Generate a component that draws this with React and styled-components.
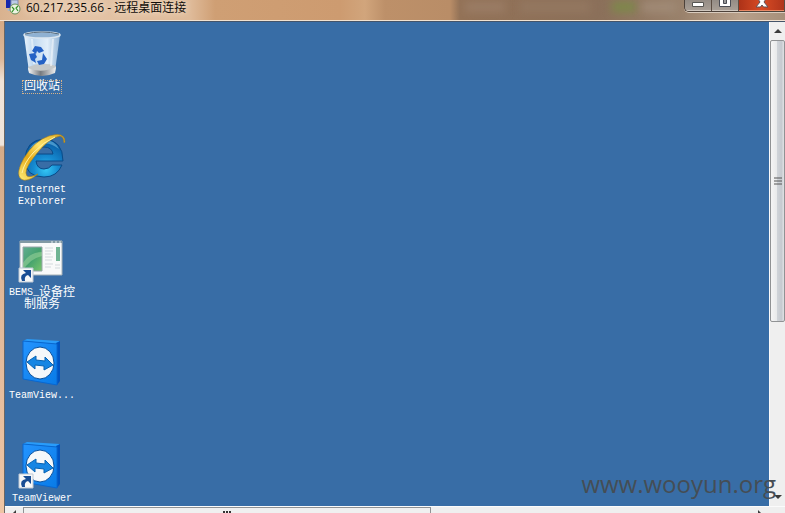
import React from "react";
import styled, { createGlobalStyle } from "styled-components";

const GlobalStyle = createGlobalStyle`
  *, *::before, *::after { box-sizing: border-box; }
  html, body, #root { height: 100%; }
  body { margin: 0; overflow: hidden; }
  button { margin: 0; padding: 0; border: 0; background: none; font: inherit; color: inherit; }
`;

const Window = styled.main`
  position: relative;
  display: grid;
  grid-template-rows: 21px minmax(0, 1fr);
  height: 100vh;
  overflow: hidden;
  font-family: "Open Sans", "Noto Sans CJK SC", sans-serif;
`;

const TitleBar = styled.header`
  position: relative;
  display: flex;
  align-items: flex-start;
  justify-content: space-between;
  overflow: hidden;
  padding-left: 5px;
  background: linear-gradient(90deg, #d9b28f 0, #e5c6a9 60px, #dfbb9a 190px, #cf9f74 215px, #cd9b70 340px, #d1a57c 365px, #bd9069 385px, #b98d67 450px, #937257 460px, #8b705a 600px, #99816b 680px, #b8a08a 740px, #a7907b 100%);
  border-bottom: 1px solid #f1e2d1;
`;

const Glow = styled.div`
  position: absolute;
  top: 2px;
  left: ${(p) => p.$left}px;
  width: ${(p) => p.$width}px;
  height: 10px;
  background: ${(p) => p.$color};
  filter: blur(4px);
`;

const Title = styled.h1`
  position: relative;
  display: flex;
  gap: 5px;
  margin: 0;
  font-size: 12px;
  line-height: 16px;
  font-weight: 400;
  color: #100c09;
  white-space: nowrap;
  text-shadow: 0 0 6px #fff3e5;
`;

const Controls = styled.div`
  position: relative;
  display: flex;
  height: 12px;
  border: 1px solid #4d423a;
  border-width: 0 0 1px 1px;
  border-radius: 0 0 0 5px;
  overflow: hidden;
  box-shadow: 0 1px 0 #d9cbbd;
`;

const ControlButton = styled.button`
  display: flex;
  align-items: flex-start;
  justify-content: center;
  width: ${(p) => (p.$close ? 46 : 27)}px;
  border-right: 1px solid #5b4d43;
  box-shadow: inset 0 -1px 0 ${(p) => (p.$close ? "#e98a66" : "#d0c7be")};
  background: ${(p) =>
    p.$close
      ? "linear-gradient(90deg, #ad3218, #d84b24 50%, #b0351c)"
      : "linear-gradient(#948c85, #aaa097)"};
`;

const Body = styled.div`
  display: grid;
  grid-template-columns: minmax(0, 1fr) 16px;
  grid-template-rows: minmax(0, 1fr) 7px;
  min-height: 0;
  margin-left: 4px;
  border-top: 1px solid #44546a;
  border-left: 1px solid #6b6764;
`;

const Frame = styled.div`
  display: grid;
  grid-template-rows: minmax(0, 1fr);
  min-height: 0;
  background: linear-gradient(#d4aa86 0, #ddb899 38px, #f0e3d7 60px, #efe5dc 124px, #d4ab88 126px, #dfb798 260px, #eec5a4 100%);
`;

const Desktop = styled.section`
  display: flex;
  flex-direction: column;
  align-items: flex-start;
  min-height: 0;
  overflow: hidden;
  padding-top: 8px;
  background: #386da6;
`;

const Shortcut = styled.button`
  flex: 0 0 103px;
  display: flex;
  flex-direction: column;
  align-items: center;
  gap: 3px;
  width: 74px;
  color: #fff;
`;

const Label = styled.span`
  display: block;
  padding: 0 1px;
  font: 10px/12px "Liberation Mono", monospace;
  text-align: center;
  outline: ${(p) => (p.$focused ? "1px dotted #d5b28a" : "none")};
`;

const Chinese = styled.span`
  font: 12px/0 "Noto Sans CJK SC", sans-serif;
  vertical-align: -1px;
`;

const VerticalBar = styled.div`
  display: flex;
  flex-direction: column;
  min-height: 0;
  background: #efefef;
  border-left: 1px solid #fafafa;
`;

const HorizontalBar = styled.div`
  grid-column: 1 / -1;
  display: flex;
  overflow: hidden;
  padding-right: 16px;
  background: #efefef;
  border-top: 1px solid #fbfbfb;
`;

const ArrowButton = styled.button`
  flex: 0 0 18px;
  display: flex;
  align-items: center;
  justify-content: center;
`;

const Track = styled.div`
  flex: 1;
  display: flex;
  flex-direction: ${(p) => (p.$vertical ? "column" : "row")};
  min-width: 0;
  min-height: 0;
`;

const Thumb = styled.div`
  display: flex;
  justify-content: center;
  border: 1px solid #909294;
  ${(p) =>
    p.$vertical
      ? `
    align-items: center;
    height: 63%;
    border-radius: 2px;
    background: linear-gradient(90deg, #f5f5f5 0, #e9eaeb 45%, #cfd3d8 50%, #c6cad0 80%, #e0e2e4 100%);`
      : `
    align-items: flex-start;
    width: 56%;
    border-bottom: 0;
    background: #f0f0f0;
    padding-top: 3px;`}
`;

const Watermark = styled.div`
  position: absolute;
  right: 9px;
  bottom: 12px;
  font: 24px/34px "Open Sans", sans-serif;
  color: #454d55;
  pointer-events: none;
`;

const RemoteIcon = () => (
  <svg width="16" height="15" viewBox="0 0 16 15" aria-hidden="true">
    <path d="M1 0h5v8H1z" fill="#1728ac" />
    <path d="M6 0h7v8H6z" fill="#bccbe8" stroke="#7e8dad" />
    <path d="M2 9h6v2H3z" fill="#aab6ca" />
    <circle cx="10" cy="9" r="5" fill="#edf4e3" stroke="#68905a" />
    <path d="M7 7l2 2-2 3M13 6l-2 2 2 3" fill="none" stroke="#329126" strokeWidth="1.2" />
  </svg>
);

const BinIcon = () => (
  <svg width="48" height="48" viewBox="0 0 48 48" aria-hidden="true">
    <defs>
      <linearGradient id="bin" x2="1">
        <stop stopColor="#e9f4fd" /><stop offset=".25" stopColor="#c0d8ef" />
        <stop offset=".65" stopColor="#e1eefa" /><stop offset="1" stopColor="#92b4d6" />
      </linearGradient>
      <linearGradient id="binBase" x2="1">
        <stop stopColor="#f8f8f8" /><stop offset=".45" stopColor="#777b80" /><stop offset="1" stopColor="#f1f1f1" />
      </linearGradient>
    </defs>
    <path d="M6 5l5 37q13 7 26-1l5-36z" fill="url(#bin)" />
    <path d="M10 37q14-6 28-1l-1 6q-13 6-26 0z" fill="#c6c9c9" />
    <path d="M10 38q13 6 28-1l-1 6q-13 6-26 0z" fill="url(#binBase)" />
    <ellipse cx="24" cy="5" rx="18" ry="3" fill="#8fb1d2" stroke="#dbe6f0" strokeWidth="1.5" />
    <path d="M7 4q17-4 34 0" fill="none" stroke="#526779" />
    <path d="M14 9l2 25M35 9l-2 27" stroke="#fff" strokeWidth="2" opacity=".5" />
    <g fill="#2562c5">
      <path d="M14 21l3-5 6 1 3 4-5 2-2-2-1 3z" />
      <path d="M11 24l6-1 2 4-2 2 1 4-5-3z" />
      <path d="M25 23l4 6-3 5-5 1-2-4 5-1z" />
    </g>
  </svg>
);

const ExplorerIcon = () => (
  <svg width="48" height="48" viewBox="0 0 48 48" aria-hidden="true">
    <defs>
      <radialGradient id="globe" cx=".55" cy=".8" r=".8">
        <stop stopColor="#35c8f5" /><stop offset=".4" stopColor="#168bd1" /><stop offset="1" stopColor="#07549d" />
      </radialGradient>
      <linearGradient id="ring" x1="1" x2="0" y2="1">
        <stop stopColor="#dca61a" /><stop offset=".4" stopColor="#ffe46b" />
        <stop offset=".65" stopColor="#e5a916" /><stop offset="1" stopColor="#fff07d" />
      </linearGradient>
    </defs>
    <path d="M45 28H18q1 8 8 8 5 0 8-4h10Q39 44 26 44 7 44 7 26 8 7 26 6q19 1 19 22zM18 21h17q-1-7-9-7-7 0-8 7z" fill="url(#globe)" stroke="#0a4b88" strokeWidth="1" fillRule="evenodd" />
    <path d="M11 16q5-8 15-9 11 0 15 9-10-7-17-5-8 1-13 5z" fill="#8edaf8" opacity=".45" />
    <path d="M47 9Q47-2 31 3 16 8 6 25-3 41 3 46q6 4 17-5-8 4-11 2-4-5 7-19Q30 5 42 3q4 1 4 7z" fill="url(#ring)" stroke="#ad8015" strokeWidth=".6" />
    <path d="M4 40q2-10 11-20Q25 9 37 4" fill="none" stroke="#fff3a3" />
  </svg>
);

const LinkMark = () => (
  <g>
    <path d="M1 32h14v14H1z" fill="#f7f8f8" stroke="#bfc9d4" />
    <path d="M4 45Q1 38 8 37L5 34h8v8l-3-3Q6 40 7 45z" fill="#184d94" />
  </g>
);

const ServiceIcon = () => (
  <svg width="48" height="48" viewBox="0 0 48 48" aria-hidden="true">
    <defs>
      <linearGradient id="screen" x2="1" y2="1">
        <stop stopColor="#62ad92" /><stop offset=".5" stopColor="#45a26e" /><stop offset="1" stopColor="#79c66b" />
      </linearGradient>
    </defs>
    <path d="M2 5h42v34H2z" fill="#f9fafa" stroke="#a7b2b7" />
    <path d="M2 5h42v2H2z" fill="#829aa4" />
    <path d="M33 6h2M37 6h2M41 6h2" stroke="#e7eef1" />
    <path d="M5 11h19v24H5z" fill="url(#screen)" stroke="#98a5aa" />
    <path d="M5 27q7-11 19-11v4Q11 23 5 35z" fill="#a4d89f" opacity=".5" />
    <path d="M27 12h8M27 15h8M27 18h6M27 21h8M27 24h7M27 28h8M27 31h6M37 29h5M37 32h5" stroke="#d3dadd" />
    <path d="M38 11h4v14h-4z" fill="#70b493" />
    <LinkMark />
  </svg>
);

const TeamIcon = ({ id, linked }) => (
  <svg width="48" height="48" viewBox="0 0 48 48" aria-hidden="true">
    <defs>
      <linearGradient id={id} x2="1" y2="1">
        <stop stopColor="#2494ff" /><stop offset="1" stopColor="#087be7" />
      </linearGradient>
    </defs>
    <path d="M5 2L9 0l33 2-3 3z" fill="#299cfa" />
    <path d="M38 4l4-2v40l-3 4z" fill="#0053c1" />
    <path d="M5 2l34 3v41L5 40z" fill={`url(#${id})`} stroke="#0867d0" />
    <ellipse cx="22" cy="24" rx="14" ry="16" fill="#f6f8fa" stroke="#064f9d" />
    <path d="M9 23l9-6v4l9 1v-4l8 8-9 5v-4l-9-1v4z" fill="#1686e4" stroke="#0763b3" />
    {linked && <LinkMark />}
  </svg>
);

const Arrow = ({ d }) => (
  <svg width="8" height="8" viewBox="0 0 8 8" aria-hidden="true">
    <path d={d} fill="#3b3b3b" />
  </svg>
);

const shortcuts = [
  { id: "bin", icon: <BinIcon />, label: <Chinese>回收站</Chinese>, focused: true },
  { id: "ie", icon: <ExplorerIcon />, label: <>Internet<br />Explorer</> },
  { id: "bems", icon: <ServiceIcon />, label: <>BEMS_<Chinese>设备控<br />制服务</Chinese></> },
  { id: "setup", icon: <TeamIcon id="teamSetup" />, label: "TeamView..." },
  { id: "team", icon: <TeamIcon id="team" linked />, label: "TeamViewer" },
];

export default function App() {
  return (
    <>
      <GlobalStyle />
      <Window>
        <TitleBar>
          <Glow $left={465} $width={40} $color="#9b7d66" />
          <Glow $left={520} $width={70} $color="#947861" />
          <Glow $left={612} $width={24} $color="#7c8949" />
          <Glow $left={642} $width={35} $color="#a18b77" />
          <Title><RemoteIcon />60.217.235.66 - 远程桌面连接</Title>
          <Controls>
            <ControlButton aria-label="最小化">
              <svg width="14" height="11" aria-hidden="true"><path d="M1.5 2.5h11v4h-11z" fill="#fff" stroke="#575653" /></svg>
            </ControlButton>
            <ControlButton aria-label="最大化">
              <svg width="14" height="11" aria-hidden="true"><path d="M1.5-4.5h11v11h-11z" fill="#fff" stroke="#4b4d55" /><path d="M5.5-.5h3v4h-3z" fill="#999" stroke="#4b4d55" /></svg>
            </ControlButton>
            <ControlButton $close aria-label="关闭">
              <svg width="24" height="11" viewBox="-4 0 24 11" aria-hidden="true"><path d="M2-4h4l2 3 2-3h4l-4 6 4 5H9.5L8 5 6.500 7H2l4-5z" fill="#fff" stroke="#625257" /></svg>
            </ControlButton>
          </Controls>
        </TitleBar>
        <Frame>
          <Body>
            <Desktop aria-label="远程桌面">
              {shortcuts.map((item) => (
                <Shortcut key={item.id}>
                  {item.icon}
                  <Label $focused={item.focused}>{item.label}</Label>
                </Shortcut>
              ))}
            </Desktop>
            <VerticalBar>
              <ArrowButton aria-label="向上滚动"><Arrow d="M0 6l4-4 4 4z" /></ArrowButton>
              <Track $vertical>
                <Thumb $vertical>
                  <svg width="8" height="8" aria-hidden="true"><path d="M0 1h8M0 4h8M0 7h8" stroke="#555" /></svg>
                </Thumb>
              </Track>
              <ArrowButton aria-label="向下滚动"><Arrow d="M0 2l4 4 4-4z" /></ArrowButton>
            </VerticalBar>
            <HorizontalBar>
              <ArrowButton aria-label="向左滚动"><Arrow d="M6 4L2 8h4z" /></ArrowButton>
              <Track>
                <Thumb>
                  <svg width="8" height="8" aria-hidden="true"><path d="M1 0v8M4 0v8M7 0v8" stroke="#333" strokeWidth="2" /></svg>
                </Thumb>
              </Track>
              <ArrowButton aria-label="向右滚动"><Arrow d="M2 4l4 4H2z" /></ArrowButton>
            </HorizontalBar>
          </Body>
        </Frame>
        <Watermark>www.wooyun.org</Watermark>
      </Window>
    </>
  );
}
